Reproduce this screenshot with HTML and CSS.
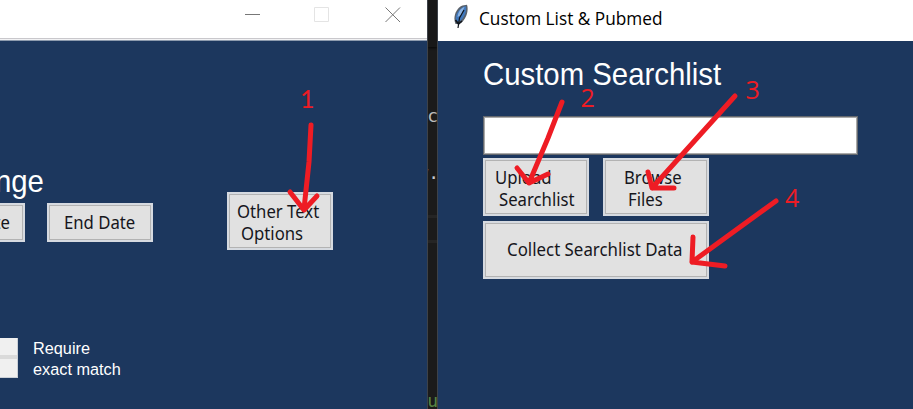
FILE: index.html
```html
<!DOCTYPE html>
<html lang="en">
<head>
<meta charset="utf-8">
<title>Custom List &amp; Pubmed</title>
<link rel="stylesheet" href="styles.css">
</head>
<body>
<main class="desktop">
  <section class="window window-left">
    <header class="titlebar controls">
      <svg width="16" height="16" viewBox="0 0 16 16"><path d="M0 7.5H15"/></svg>
      <svg class="muted" width="16" height="16" viewBox="0 0 16 16"><path d="M.5.5H14.5V14.5H.5Z"/></svg>
      <svg width="16" height="16" viewBox="0 0 16 16"><path d="M.5.5L15 15M15 .5L.5 15"/></svg>
    </header>
    <div class="panel-left">
      <h2 class="heading range"><span>Range</span></h2>
      <div class="dates">
        <button class="btn start"><span>Start Date</span></button>
        <button class="btn end"><span>End Date</span></button>
        <button class="btn other"><span>Other Text</span><span class="second">Options</span></button>
      </div>
      <div class="match"><i class="toggle"></i><p>Require<br>exact match</p></div>
    </div>
  </section>
  <aside class="editor">
    <div class="editor-top"></div>
    <code class="c1">rc</code><code class="c2">w.</code><i class="rule"></i><code class="c3">ou</code>
  </aside>
  <section class="window window-right">
    <header class="titlebar title">
      <svg class="feather" width="16" height="26" viewBox="0 0 16 26">
        <path d="M2.5 20C-.5 13 3 4 9.500 1.500L14 .8C16 7 13 15 8 19L4 20Z" fill="#59616b"/>
        <path d="M3 18C1.500 12 5 5 11 2.500L13 2.300C14 8 11 14 7 17Z" fill="#3f78bd"/>
        <path d="M4.500 13C5 8 8 4 11.500 3L8 11Z" fill="#8db4e2"/>
        <path d="M11 6L6.500 14L5 24" fill="none" stroke="#10151c" stroke-width="1.2"/>
        <path d="M2.500 16L5.500 20L9 17" fill="none" stroke="#10151c" stroke-width="1.6"/>
      </svg>
      <span>Custom List &amp; Pubmed</span>
    </header>
    <div class="panel-right">
      <h1 class="heading"><span>Custom Searchlist</span></h1>
      <input class="entry" type="text" aria-label="Searchlist">
      <div class="row">
        <button class="btn upload"><span>Upload</span><span class="second">Searchlist</span></button>
        <button class="btn browse"><span>Browse</span><span class="second">Files</span></button>
      </div>
      <button class="btn collect"><span>Collect Searchlist Data</span></button>
    </div>
  </section>
  <svg class="notes" width="913" height="409" viewBox="0 0 913 409">
    <path d="M311 125L309 162L304 209M290 192L304 210L317 196"/>
    <path d="M562 102L548 138L529 183M517 168L529 183L548 174"/>
    <path d="M735 96L652 188M648 172L652 188H674"/>
    <path d="M776 201L692 262M693 237L692 262L725 266"/>
    <text class="one" x="300" y="108">1</text><text x="580.5" y="107">2</text><text x="745.5" y="99">3</text><text x="785" y="207">4</text>
  </svg>
</main>
</body>
</html>
```
FILE: styles.css
```css
* { box-sizing: border-box; }
body { margin: 0; overflow: hidden; }
.desktop {
  position: relative;
  display: grid;
  grid-template-columns: 427px 11px 475px;
  width: 913px;
  height: 409px;
  background: #1b1b1b;
}
.window { background: #1c375e; overflow: hidden; }
.titlebar { height: 41px; background: #fff; }
.controls {
  display: flex;
  gap: 54px;
  padding: 7px 0 0 245px;
  border-bottom: 1px solid #8d9bae;
  background: linear-gradient(#fff 38px, #c9c8cc 38px 39px, #f2f2f4 39px);
}
.controls svg { flex: none; fill: none; stroke: #777; stroke-width: 1; }
.controls .muted { stroke: #e4e4e4; }
.controls svg:first-child { margin-right: -1px; }
.controls .muted + svg { margin-left: 1px; }
.heading {
  margin: 0;
  color: #fff;
  font: 400 30.5px/34px "Liberation Sans", sans-serif;
  white-space: nowrap;
}
.heading span { display: inline-block; transform: scaleX(.962); transform-origin: left; }
.range { display: flex; justify-content: flex-end; width: 44px; margin-top: 123px; }
.range span { transform-origin: right; }
.dates { display: flex; align-items: flex-start; height: 63px; margin-top: -6px; }
.btn {
  display: flex;
  flex-direction: column;
  align-items: flex-start;
  flex: none;
  width: 106px;
  height: 58px;
  margin: 0;
  padding: 6px 0 0 10px;
  border: 2px solid #d6dae0;
  border-radius: 0;
  background: #e1e1e1;
  box-shadow: inset 0 0 0 1px #b3b3b3;
  color: #16161c;
  font: 400 17.8px/22px "Noto Sans", sans-serif;
  white-space: nowrap;
}
.btn span { transform: scaleX(.94); transform-origin: left; }
.start { align-items: flex-end; height: 39px; margin: 11px 0 0 -81px; padding: 6px 13px 0 0; }
.start span { transform-origin: right; }
.end { height: 39px; margin: 11px 0 0 22px; padding: 6px 0 0 15px; }
.other { margin-left: 74px; padding-left: 8px; }
.other .second { margin-left: 4px; }
.match { display: flex; margin-top: 83px; }
.toggle {
  width: 18px;
  height: 40px;
  background: linear-gradient(#f0f0f0 17px, #dadada 17px 21px, #f0f0f0 21px);
  border: solid #cbd0d7;
  border-width: 0 1px 1px 0;
}
.match p { margin: 0 0 0 15px; color: #fff; font: 16.3px/21px "Liberation Sans", sans-serif; }
.editor { position: relative; overflow: hidden; border: solid #3d4249; border-width: 0 1px; }
.editor-top { height: 47px; background: #181818; box-shadow: 0 1px 3px #050505; }
.editor code { position: absolute; right: -1px; color: #bbb; font: 18px/20px "DejaVu Sans Mono", monospace; }
.editor .c1 { top: 106px; }
.editor .c2 { right: -2px; top: 163px; color: #c4c9cf; }
.editor .c3 { top: 391px; color: #588544; }
.rule { position: absolute; top: 215px; left: 0; width: 10px; height: 28px; border: solid #252525; border-width: 3px 0; }
.title { display: flex; align-items: flex-start; padding: 4px 0 0 15px; }
.title span {
  margin: 1px 0 0 10px;
  color: #000;
  font: 17.5px/26px "Open Sans", sans-serif;
  white-space: nowrap;
  transform: scaleX(.985);
  transform-origin: left;
}
.feather { flex: none; }
.panel-right { padding: 16px 0 0 45px; }
.entry {
  display: block;
  width: 375px;
  height: 39px;
  margin: 25px 0 3px;
  padding: 0;
  border: 1px solid #64686e;
  border-radius: 0;
  outline: 0;
  background: #fff;
  box-shadow: inset 0 0 0 1px #aaa;
}
.row { display: flex; gap: 14px; margin-bottom: 5px; }
.upload .second { margin-left: 4px; }
.browse { padding-left: 19px; }
.browse .second { margin-left: 4px; }
.collect { width: 226px; padding: 15px 0 0 22px; }
.collect span { transform: scaleX(.948); }
.notes { position: absolute; inset: 0; pointer-events: none; }
.notes path { fill: none; stroke: #ee1c24; stroke-width: 5; stroke-linecap: round; stroke-linejoin: round; }
.notes text { fill: #ee1c24; font: 25px "Open Sans", sans-serif; }
.notes .one { font-family: Lato, sans-serif; }
```
